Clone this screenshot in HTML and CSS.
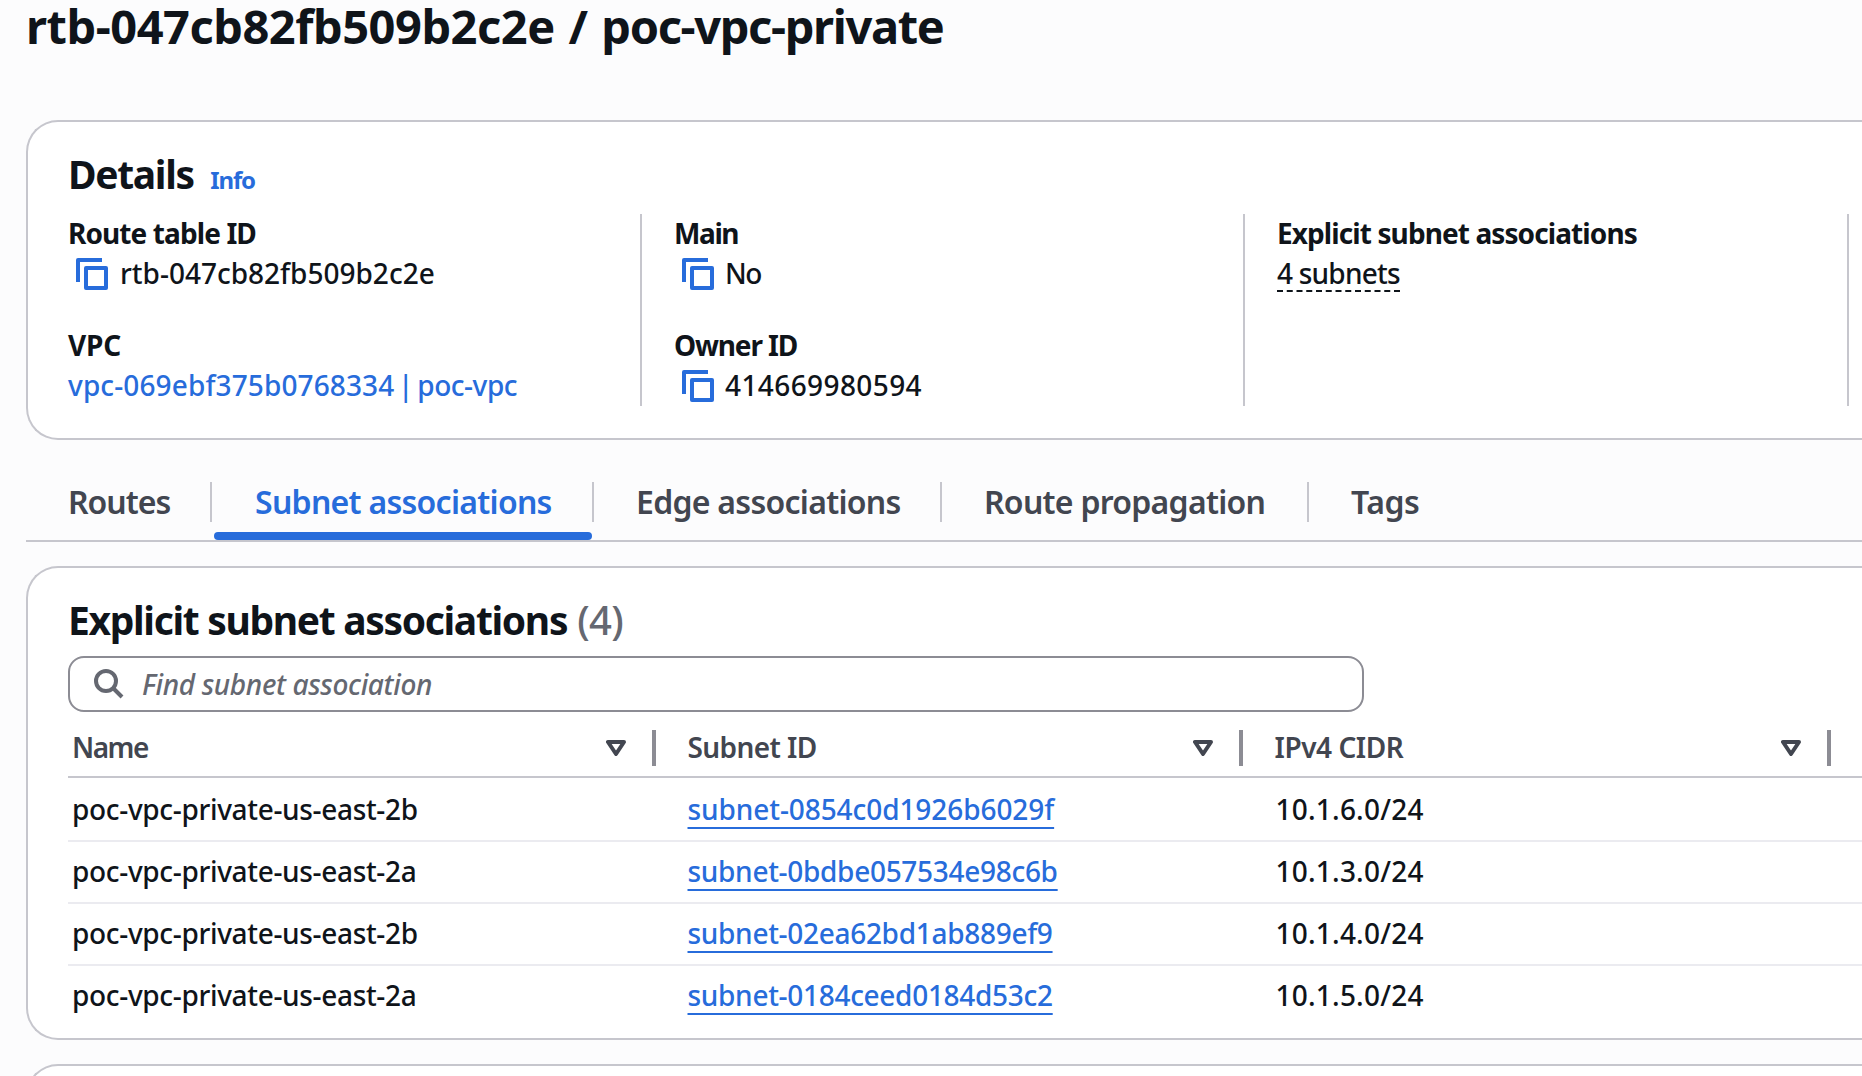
FILE: index.html
```html
<!DOCTYPE html>
<html lang="en">
<head>
<meta charset="utf-8">
<title>Route table details</title>
<link rel="stylesheet" href="styles.css">
</head>
<body>
<svg class="defs" width="0" height="0" aria-hidden="true">
  <symbol id="copy" viewBox="0 0 32 32">
    <path d="M2 24V2h24" fill="none" stroke="currentColor" stroke-width="4" stroke-linejoin="round"/>
    <rect x="10" y="10" width="20" height="20" fill="none" stroke="currentColor" stroke-width="4" stroke-linejoin="round"/>
  </symbol>
  <symbol id="sort" viewBox="0 0 20 16">
    <path d="M2 2h16l-8 12z" fill="none" stroke="currentColor" stroke-width="4" stroke-linejoin="round"/>
  </symbol>
</svg>
<main class="page">
  <h1 class="page-title">rtb-047cb82fb509b2c2e / <span class="resource">poc-vpc-private</span></h1>

  <section class="card details">
    <header class="card-header"><h2 class="card-title">Details</h2><a class="info">Info</a></header>
    <div class="columns">
      <div class="column">
        <div class="field">
          <div class="label">Route table ID</div>
          <div class="value"><svg class="copy"><use href="#copy"/></svg><span class="ids">rtb-047cb82fb509b2c2e</span></div>
        </div>
        <div class="field">
          <div class="label acronym">VPC</div>
          <div class="value"><a class="link vpc">vpc-069ebf375b0768334 | <span class="alias">poc-vpc</span></a></div>
        </div>
      </div>
      <div class="column">
        <div class="field">
          <div class="label short">Main</div>
          <div class="value"><svg class="copy"><use href="#copy"/></svg><span class="flag">No</span></div>
        </div>
        <div class="field">
          <div class="label owner">Owner ID</div>
          <div class="value"><svg class="copy"><use href="#copy"/></svg><span class="digits">414669980594</span></div>
        </div>
      </div>
      <div class="column">
        <div class="field">
          <div class="label">Explicit subnet associations</div>
          <div class="value"><span class="popover">4 subnets</span></div>
        </div>
      </div>
      <div class="column"></div>
    </div>
  </section>

  <nav class="tabs">
    <a class="tab routes">Routes</a>
    <a class="tab active">Subnet associations</a>
    <a class="tab">Edge associations</a>
    <a class="tab">Route propagation</a>
    <a class="tab">Tags</a>
  </nav>

  <section class="card associations">
    <header class="card-header"><h2 class="card-title">Explicit subnet associations</h2><span class="counter">(4)</span></header>
    <div class="search">
      <svg class="search-icon" viewBox="0 0 30 30"><circle cx="12" cy="12" r="10"/><path d="M19 19l9 9"/></svg>
      <span class="placeholder">Find subnet association</span>
    </div>
    <div class="table">
      <div class="row head">
        <div class="cell"><span class="name">Name</span><svg class="sort"><use href="#sort"/></svg></div>
        <div class="cell"><span>Subnet ID</span><svg class="sort"><use href="#sort"/></svg></div>
        <div class="cell"><span class="cidr">IPv4 CIDR</span><svg class="sort"><use href="#sort"/></svg></div>
      </div>
      <div class="row"><div class="cell">poc-vpc-private-us-east-2b</div><div class="cell"><a class="link wide">subnet-0854c0d1926b6029f</a></div><div class="cell ip">10.1.6.0/24</div></div>
      <div class="row"><div class="cell">poc-vpc-private-us-east-2a</div><div class="cell"><a class="link">subnet-0bdbe057534e98c6b</a></div><div class="cell ip">10.1.3.0/24</div></div>
      <div class="row"><div class="cell">poc-vpc-private-us-east-2b</div><div class="cell"><a class="link">subnet-02ea62bd1ab889ef9</a></div><div class="cell ip">10.1.4.0/24</div></div>
      <div class="row"><div class="cell">poc-vpc-private-us-east-2a</div><div class="cell"><a class="link">subnet-0184ceed0184d53c2</a></div><div class="cell ip">10.1.5.0/24</div></div>
    </div>
  </section>

  <section class="next"></section>
</main>
</body>
</html>
```
FILE: styles.css
```css
* { box-sizing: border-box; }
body {
  margin: 0;
  height: 1076px;
  background: #fcfcfd;
  color: #0f141a;
  font: 500 28px/38px "Noto Sans", "Open Sans", sans-serif;
}
.defs { position: absolute; }
.page { padding-left: 26px; height: 1076px; }
.page-title {
  margin: 0 0 68px;
  padding-top: 1px;
  font-size: 47px;
  line-height: 51px;
  font-weight: 700;
  letter-spacing: -0.48px;
  word-spacing: 2px;
}
.resource { letter-spacing: -1.35px; }

.card {
  background: #fff;
  border: 2px solid #c6c6cd;
  border-right: 0;
  border-radius: 32px 0 0 32px;
  padding: 24px 0 32px 40px;
}
.card-header { display: flex; align-items: baseline; height: 55px; }
.card-title { margin: 0; font-size: 39px; line-height: 55px; font-weight: 700; letter-spacing: -1.33px; }
.info { margin-left: 16.5px; color: #276cdb; font-size: 24px; font-weight: 700; letter-spacing: -1.1px; }
.counter { margin-left: 10px; color: #656871; font-size: 40px; line-height: 55px; letter-spacing: -0.68px; }

.columns {
  display: grid;
  grid-template-columns: 572px 603px 604px auto;
  height: 192px;
  margin-top: 13px;
}
.column { display: flex; flex-direction: column; gap: 32px; }
.column + .column { border-left: 2px solid #c6c6cd; padding-left: 32px; }
.label { font-weight: 700; letter-spacing: -0.9px; }
.label.short { letter-spacing: -1.4px; }
.label.owner { letter-spacing: -1.15px; }
.label.acronym { letter-spacing: -0.2px; }
.value { display: flex; height: 42px; padding-top: 2px; }
.copy { width: 32px; height: 32px; margin: 4px 12px 0 8px; color: #276cdb; }
.column + .column .copy { margin-right: 11px; }
.ids { letter-spacing: 0; }
.vpc { letter-spacing: 0.12px; word-spacing: -3.75px; }
.alias { letter-spacing: -0.45px; }
.flag { letter-spacing: -1.5px; }
.digits { letter-spacing: 0.4px; }
.popover { height: 38px; border-bottom: 2px dashed #0f141a; letter-spacing: -0.78px; }
.link { color: #276cdb; }

.tabs {
  display: grid;
  grid-template-columns: 186px 382px 348px 367px auto;
  height: 102px;
  padding: 42px 0 18px;
  margin-bottom: 24px;
  border-bottom: 2px solid #c6c6cd;
}
.tab {
  position: relative;
  padding-left: 42px;
  border-right: 2px solid #c6c6cd;
  color: #424650;
  font-size: 32px;
  line-height: 40px;
  font-weight: 600;
  letter-spacing: -0.72px;
}
.tab.routes { letter-spacing: -1px; }
.tab:last-child { border-right: 0; letter-spacing: -0.47px; }
.tab.active { padding-left: 43px; color: #276cdb; }
.tab.active::after {
  content: "";
  position: absolute;
  left: 2px;
  right: 0;
  top: 50px;
  height: 8px;
  border-radius: 4px;
  background: #276cdb;
}

.associations { height: 474px; padding-bottom: 0; }
.search {
  display: flex;
  align-items: center;
  width: 1296px;
  height: 56px;
  margin-top: 9px;
  padding-left: 24px;
  border: 2px solid #8c8c94;
  border-radius: 16px;
}
.search-icon { width: 30px; height: 30px; fill: none; stroke: #656871; stroke-width: 4; }
.placeholder { margin-left: 18px; color: #656871; font-style: italic; letter-spacing: -0.35px; }

.row {
  display: grid;
  grid-template-columns: 588px 587px 588px;
  border-bottom: 2px solid #ebebf0;
  line-height: 58px;
}
.row .cell { height: 60px; padding-left: 31.5px; letter-spacing: -0.33px; }
.row .cell:first-child { padding-left: 4px; }
.row.head { padding-top: 8px; border-color: #c6c6cd; margin-bottom: 2px; line-height: 38px; }
.row.head .cell {
  display: flex;
  align-items: center;
  justify-content: space-between;
  height: 36px;
  margin: 10px 0;
  padding-right: 26px;
  border-right: 4px solid #8c8c94;
  color: #424650;
  font-weight: 600;
  letter-spacing: -0.61px;
}
.row.head span { padding-bottom: 2px; }
.row.head .name { letter-spacing: -1.5px; }
.row.head .cidr { letter-spacing: -0.45px; }
.row:last-child { border-bottom: 0; }
.row:last-child .cell { height: 58px; }
.row .link {
  letter-spacing: -0.3px;
  text-decoration: underline 2px;
  text-underline-offset: 7px;
  text-decoration-skip-ink: none;
}
.row .link.wide { letter-spacing: -0.08px; }
.row .cell.ip { padding-left: 32.5px; letter-spacing: 0.22px; }
.sort { width: 20px; height: 16px; }

/* Only the top edge of the following card is in view */
.next { height: 12px; margin-top: 24px; overflow: hidden; }
.next::before {
  content: "";
  display: block;
  height: 80px;
  background: #fff;
  border: 2px solid #c6c6cd;
  border-right: 0;
  border-radius: 32px 0 0 32px;
}
```
